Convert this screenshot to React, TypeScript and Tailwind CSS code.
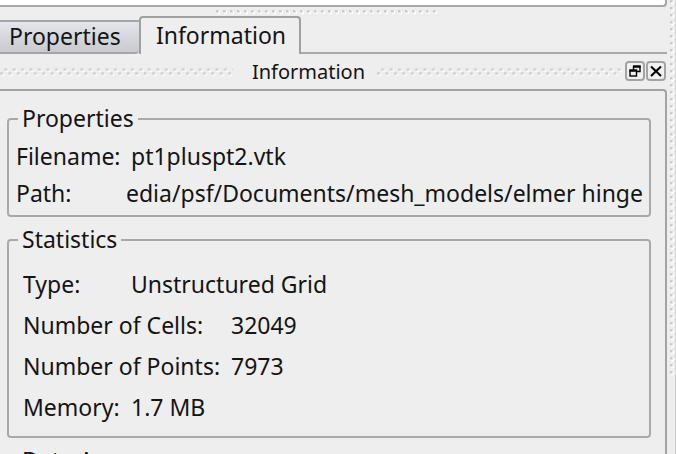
import { useId, type ReactNode } from "react";

function LineGrip({ className, vertical = false }: { className: string; vertical?: boolean }) {
  const id = useId();
  return (
    <svg aria-hidden="true" className={className}>
      <defs>
        <pattern id={id} width={vertical ? 5 : 7} height={vertical ? 7 : 5} patternUnits="userSpaceOnUse">
          <rect x="1" y="1" width="3" height="3" fill="#ffffff" />
          <rect x="0" y="0" width="3" height="3" fill="#e2e2e2" />
          <rect x="0" y="0" width="2" height="2" fill="#cbcbcb" />
        </pattern>
      </defs>
      <rect width="100%" height="100%" fill={`url(#${id})`} />
    </svg>
  );
}

function ZigzagGrip({ className }: { className: string }) {
  const id = useId();
  return (
    <svg aria-hidden="true" className={`h-2 min-w-0 grow ${className}`}>
      <defs>
        <pattern id={id} width="8.45" height="8" patternUnits="userSpaceOnUse">
          <rect x="5.2" y="1" width="3" height="3" fill="#ffffff" />
          <rect x="4.2" y="0" width="3" height="3" fill="#d6d6d6" />
          <rect x="1" y="5" width="3" height="3" fill="#ffffff" />
          <rect x="0" y="4" width="3" height="3" fill="#d6d6d6" />
        </pattern>
      </defs>
      <rect width="100%" height="100%" fill={`url(#${id})`} />
    </svg>
  );
}

function DockButton({ label, children }: { label: string; children: ReactNode }) {
  return (
    <button
      type="button"
      aria-label={label}
      className="flex size-5 items-center justify-center rounded border-2 border-[#a3a3a5] bg-[#f1f1f1]"
    >
      <svg viewBox="0 0 12 12" className="size-3 shrink-0" fill="none" stroke="#000000">
        {children}
      </svg>
    </button>
  );
}

function Group({ title, children }: { title: string; children?: ReactNode }) {
  return (
    <fieldset className="min-w-0 rounded-[4px] border-2 border-[#a9a9a9]">
      <legend className="ml-[9px] px-1 pb-[2px] leading-[26px]">{title}</legend>
      {children}
    </fieldset>
  );
}

const statistics = [
  { label: "Type:", value: "Unstructured Grid", width: "w-[108px]" },
  { label: "Number of Cells:", value: "32049", width: "w-[208px]" },
  { label: "Number of Points:", value: "7973", width: "w-[208px]" },
  { label: "Memory:", value: "1.7 MB", width: "w-[108px]" },
];

export default function App() {
  return (
    <div className="flex h-screen overflow-hidden bg-[#eeeeee] font-['Noto_Sans',sans-serif] text-[23px] text-[#141414]">
      <main className="flex min-w-0 flex-1 flex-col">
        <div className="h-[7px] shrink-0 rounded-br border-r-2 border-b-2 border-[#a9a9a9] bg-white" />
        <div className="flex h-[9px] shrink-0 justify-center pt-[3px]">
          <LineGrip className="ml-[-14px] h-[5px] w-[222px]" />
        </div>
        <div role="tablist" className="flex h-[38px] shrink-0 items-stretch">
          <button
            type="button"
            role="tab"
            aria-selected="false"
            className="mt-1 w-[139px] rounded-br border-y-2 border-[#a4a5a7] bg-linear-to-b from-[#e4e5eb] to-[#c9cad0] pb-[2px] pl-[9px] text-left leading-7"
          >
            Properties
          </button>
          <button
            type="button"
            role="tab"
            aria-selected="true"
            className="w-[162px] rounded-t border-x-2 border-t-2 border-[#a0a0a0] pb-[2px] pl-[2px] leading-8"
          >
            Information
          </button>
          <div className="flex-1 border-b-2 border-[#a9a9a9]" />
        </div>
        <header className="flex h-[35px] shrink-0 items-center">
          <ZigzagGrip className="basis-0" />
          <h1 className="pr-3 pl-[19px] text-[20px] leading-7">Information</h1>
          <ZigzagGrip className="basis-3" />
          <div className="flex gap-px pr-px pb-px pl-[3px]">
            <DockButton label="Float panel">
              <path d="M4.5 5V1.5h6.5v5H8" strokeWidth="1.4" />
              <path d="M4 1.5h7.6" strokeWidth="2.4" />
              <rect x="1" y="5.5" width="6.5" height="5.5" strokeWidth="1.4" />
              <path d="M0.4 5.5h7.8" strokeWidth="2.4" />
            </DockButton>
            <DockButton label="Close panel">
              <path d="M1 1.5l10 9.5M11 1.5L1 11" strokeWidth="2.2" />
            </DockButton>
          </div>
        </header>
        <section className="flex min-h-0 flex-1 flex-col gap-[9px] rounded-tr border-t-2 border-r-2 border-[#a3a3a3] pt-[14px] pr-[14px] pl-[7px]">
          <Group title="Properties">
            <dl className="px-[7px] pt-[5px] pb-[3px]">
              <div className="flex h-[37px] items-center">
                <dt className="w-[115px]">Filename:</dt>
                <dd>pt1pluspt2.vtk</dd>
              </div>
              <div className="flex h-[37px] items-center">
                <dt className="w-[110px] shrink-0">Path:</dt>
                <dd className="whitespace-nowrap">edia/psf/Documents/mesh_models/elmer hinge</dd>
              </div>
            </dl>
          </Group>
          <Group title="Statistics">
            <dl className="px-[14px] pt-[10px] pb-2">
              {statistics.map(({ label, value, width }) => (
                <div key={label} className="flex h-[41px] items-center">
                  <dt className={width}>{label}</dt>
                  <dd>{value}</dd>
                </div>
              ))}
            </dl>
          </Group>
          <Group title="Data Arrays" />
        </section>
      </main>
      <div className="w-[9px] shrink-0 border-r border-[#d0d0d0] pl-[3px]">
        <LineGrip vertical className="h-[376px] w-[5px]" />
      </div>
    </div>
  );
}
